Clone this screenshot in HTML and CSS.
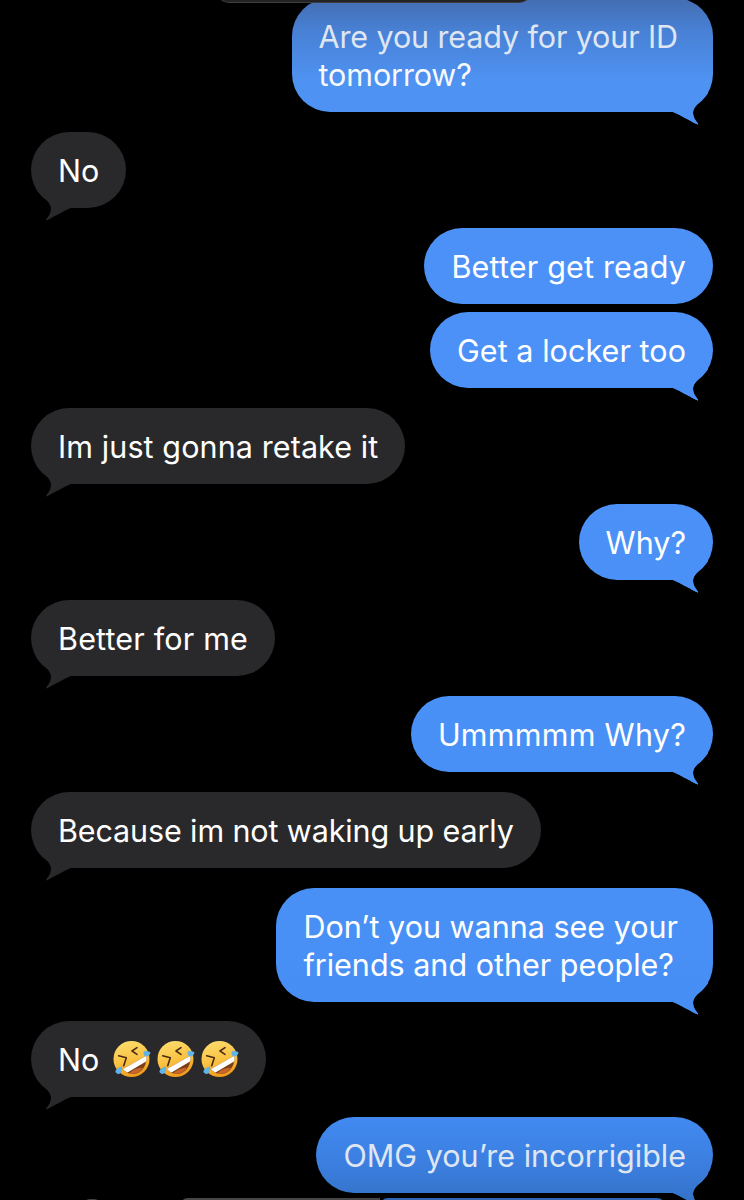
FILE: index.html
```html
<!DOCTYPE html>
<html lang="en">
<head>
<meta charset="utf-8">
<title>Messages</title>
<link rel="stylesheet" href="styles.css">
</head>
<body>
<svg class="defs" width="0" height="0" aria-hidden="true">
  <defs>
    <linearGradient id="face" x1="0.35" y1="0" x2="0.65" y2="1">
      <stop offset="0" stop-color="#fddb6c"/>
      <stop offset="0.55" stop-color="#f9c040"/>
      <stop offset="1" stop-color="#ee9618"/>
    </linearGradient>
    <symbol id="rofl" viewBox="0 0 40 40">
      <circle cx="20.5" cy="20" r="18" fill="url(#face)"/>
      <path d="M12 30 L35.3 16.7 C36.5 25 31.5 32.5 26 34.2 C20 35.8 14.5 34 12 30 Z" fill="#7a3f16"/>
      <path d="M12 30 L35.3 16.7 C35.7 19 35.5 21 35 22.5 L16.5 33.5 C14.6 32.8 13 31.4 12 30 Z" fill="#fff"/>
      <path d="M18 34.2 C22 35.6 29 34.4 32 28.5 C28 29 22 30.4 18 34.2 Z" fill="#c9652a"/>
      <path d="M26 8.7 L21 12 L26 15.3" fill="none" stroke="#4a2c14" stroke-width="1.6" stroke-linecap="round" stroke-linejoin="round"/>
      <path d="M7.7 16.7 L15.3 18.7 L12.7 26.7" fill="none" stroke="#4a2c14" stroke-width="1.6" stroke-linecap="round" stroke-linejoin="round"/>
      <path d="M33 12.3 C35 11.6 38 12.2 39.5 13.5 C39 16 36.8 17.8 34.8 17.6 C32.8 17.2 32 14 33 12.3 Z" fill="#62b4e8"/>
      <path d="M11 27.5 C11.6 30 11 32.5 9 34.6 C7.4 35.6 5 34.6 4.5 32.8 C4.2 30.6 8 28 11 27.5 Z" fill="#62b4e8"/>
    </symbol>
  </defs>
</svg>
<div class="edge edge-top"></div>
<div class="edge edge-bottom-gray"></div>
<div class="edge edge-bottom-dot"></div>
<div class="edge edge-bottom-blue"></div>
<main class="thread">
  <p class="bubble out wrapped dim tight">Are you ready for your ID<br><span class="bright">tomorrow?</span></p>
  <p class="bubble in gap">No</p>
  <p class="bubble out notail gap wide">Better get ready</p>
  <p class="bubble out near hair">Get a locker too</p>
  <p class="bubble in gap slight">Im just gonna retake it</p>
  <p class="bubble out gap">Why?</p>
  <p class="bubble in gap wide">Better for me</p>
  <p class="bubble out gap wider">Ummmmm Why?</p>
  <p class="bubble in gap tight">Because im not waking up early</p>
  <p class="bubble out wrapped gap">Don’t you wanna see your<br>friends and other people?</p>
  <p class="bubble in gap-tight emoji-row">No <span class="emojis"><svg class="emoji"><use href="#rofl"/></svg><svg class="emoji"><use href="#rofl"/></svg><svg class="emoji"><use href="#rofl"/></svg></span></p>
  <p class="bubble out gap dim">OMG you’re incorrigible</p>
</main>
</body>
</html>
```
FILE: styles.css
```css
html, body {
  margin: 0;
  height: 1200px;
  overflow: hidden;
  background: #000;
}

.defs {
  position: absolute;
}

.thread {
  display: flex;
  flex-direction: column;
  margin-top: -2px;
  padding: 0 31px;
  font-family: Inter, "Liberation Sans", sans-serif;
  font-size: 30.5px;
  line-height: 38px;
  font-weight: 400;
}

.bubble {
  position: relative;
  margin: 0;
  padding: 20px 27px 18px;
  width: fit-content;
  white-space: nowrap;
  border-radius: 38px;
  color: #fff;
}

.wrapped { padding-right: 35px; }

.tight { letter-spacing: -0.12px; }
.hair { letter-spacing: 0.06px; }
.slight { letter-spacing: 0.1px; }
.wide { letter-spacing: 0.18px; }
.wider { letter-spacing: 0.26px; }

.gap { margin-top: 20px; }
.gap-tight { margin-top: 19px; }
.near { margin-top: 8px; }

.in {
  align-self: flex-start;
  background: #29292b;
}

.out {
  align-self: flex-end;
  background-color: #4a90f5;
  background-image: linear-gradient(180deg,
    #446eb2 0px, #4880d4 30px, #4e92f2 80px, #4c91f7 250px,
    #4890f6 950px, #4189f0 1120px, #3b7edf 1165px, #3573c9 1200px);
  background-attachment: fixed;
}

.dim { color: #dfe6f1; }
.bright { color: #f7f9fc; }

.bubble::after {
  content: "";
  position: absolute;
  bottom: -13px;
  width: 44px;
  height: 34px;
  background: inherit;
  clip-path: path("M4 21 C10 23.5 20 29 26.5 32.6 C28.5 33.8 29.4 33.6 28.8 32.4 C26 29 24 25.5 24 21.5 C24.5 17 28 13.5 30.5 11 C34 8 37 5 39 2 L39 0 L4 0 Z");
}

.out::after {
  right: 0;
}

.in::after {
  left: 0;
  transform: scaleX(-1);
}

.notail::after {
  display: none;
}

.emoji-row {
  display: flex;
  align-items: center;
  height: 38px;
  white-space: pre;
}

.emojis {
  display: flex;
  gap: 4px;
  margin: -2px 0 0 3px;
}

.emoji {
  display: block;
  width: 40px;
  height: 40px;
}

/* Slivers of the neighbouring messages cut off by the screenshot edges */
.edge {
  position: absolute;
  z-index: 2;
}

.edge-top {
  top: -10px;
  left: 216px;
  width: 316px;
  height: 12px;
  background: #232325;
  border-bottom: 1px solid #3e3e40;
  border-radius: 0 0 14px 14px;
}

.edge-bottom-gray {
  top: 1198px;
  left: 180px;
  width: 200px;
  height: 10px;
  background: #47474a;
  border-radius: 8px 0 0 0;
}

.edge-bottom-dot {
  top: 1199px;
  left: 82px;
  width: 20px;
  height: 10px;
  background: #47474a;
  border-radius: 50%;
}

.edge-bottom-blue {
  top: 1198px;
  left: 380px;
  width: 285px;
  height: 10px;
  background: #2f66b4;
  border-radius: 8px 8px 0 0;
}
```
